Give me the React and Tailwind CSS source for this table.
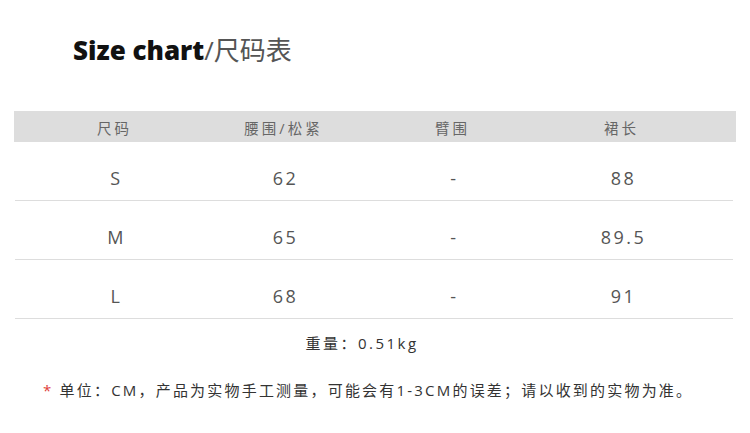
import React from "react";

const rows = [
  { size: "S", waist: "62", arm: "-", length: "88" },
  { size: "M", waist: "65", arm: "-", length: "89.5" },
  { size: "L", waist: "68", arm: "-", length: "91" },
];

const font = { fontFamily: '"Open Sans", "Noto Sans CJK SC", sans-serif' };

export default function App() {
  return (
    <div className="w-[750px] h-[433px] bg-white overflow-hidden" style={font}>
      {/* title */}
      <div className="pt-[32px] pl-[73px] h-[111px]">
        <h1 className="text-[26px] leading-[36px] text-[#111] font-extrabold">
          Size chart<span className="font-normal text-[#555]">/尺码表</span>
        </h1>
      </div>

      {/* header */}
      <div className="ml-[14px] w-[722px] h-[31px] bg-[#dddddd]">
        <div className="grid grid-cols-[169px_169px_169px_169px] pl-[16px] pt-[8px] text-[14.5px] leading-[20px] tracking-[3px] text-[#666] text-center">
          <div>尺码</div>
          <div>腰围/松紧</div>
          <div>臂围</div>
          <div>裙长</div>
        </div>
      </div>

      {/* rows */}
      <div className="ml-[15px] w-[718px]">
        {rows.map(r => (
          <div key={r.size} className="h-[59px] border-b border-[#dddddd] grid grid-cols-[169px_169px_169px_169px] pl-[17px] pt-[26px] text-[18px] leading-[20px] tracking-[2.5px] text-[#555] text-center">
            <div>{r.size}</div>
            <div>{r.waist}</div>
            <div>{r.arm}</div>
            <div>{r.length}</div>
          </div>
        ))}
      </div>

      {/* weight */}
      <div className="pt-[14px] pr-[26px] text-center text-[15px] leading-[20px] tracking-[2.5px] text-[#333]">
        重量：0.51kg
      </div>

      {/* note */}
      <div className="pt-[27px] pl-[43px] text-[15px] leading-[20px] tracking-[2.2px] text-[#333]">
        <span className="text-[#e0403a]">*</span> 单位：CM，产品为实物手工测量，可能会有1-3CM的误差；请以收到的实物为准。
      </div>
    </div>
  );
}
